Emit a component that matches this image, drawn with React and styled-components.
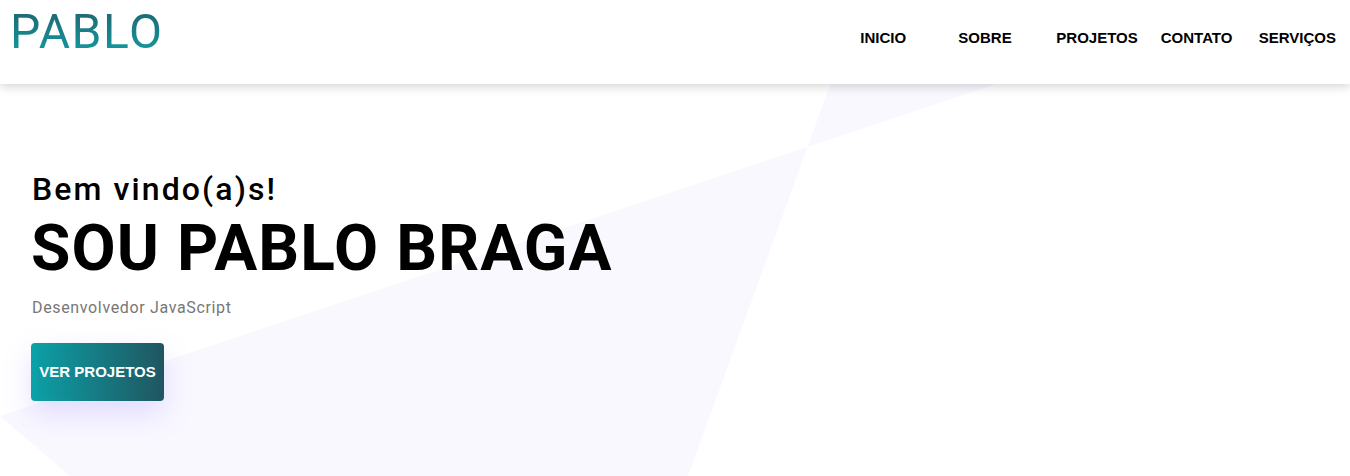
import styled, { createGlobalStyle } from "styled-components";

const GlobalStyle = createGlobalStyle`
    * {
        box-sizing: border-box;
    }

    body {
        margin: 0;
        background: #ffffff;
        font-family: Roboto, "Liberation Sans", Arial, sans-serif;
    }
`;

const links = ["INICIO", "SOBRE", "PROJETOS", "CONTATO", "SERVIÇOS"];

export default function App() {
    return (
        <>
            <GlobalStyle />
            <Page>
                <Backdrop viewBox="0 0 1350 476" preserveAspectRatio="none" aria-hidden="true">
                    <polygon points="861,0 1248,0 807.6,146.8" />
                    <polygon points="807.6,146.8 0,416 70,476 688,476" />
                </Backdrop>

                <Header>
                    <Logo>PABLO</Logo>
                    <Nav>
                        {links.map((link) => (
                            <NavLink key={link} href="#">{link}</NavLink>
                        ))}
                    </Nav>
                </Header>

                <Hero>
                    <Welcome>Bem vindo(a)s!</Welcome>
                    <Title>SOU PABLO BRAGA</Title>
                    <Role>Desenvolvedor JavaScript</Role>
                    <Button>
                        <ButtonInner>VER PROJETOS</ButtonInner>
                    </Button>
                </Hero>
            </Page>
        </>
    );
}

const Page = styled.div`
    position: relative;
    width: 100%;
    height: 476px;
    overflow: hidden;
`;

const Backdrop = styled.svg`
    position: absolute;
    top: 0;
    left: 0;
    width: 1350px;
    height: 476px;
    z-index: 0;

    polygon {
        fill: #f9f8ff;
    }
`;

const Header = styled.header`
    position: relative;
    z-index: 2;
    display: flex;
    justify-content: space-between;
    align-items: flex-start;
    height: 84px;
    padding: 0 14px 0 10px;
    background: #ffffff;
    box-shadow: 0 3px 9px rgba(0, 0, 0, 0.16);
`;

const Logo = styled.h1`
    margin: 4px 0 0;
    font-family: Roboto, sans-serif;
    font-weight: 400;
    font-size: 48px;
    line-height: 56px;
    letter-spacing: 1.6px;
    background: linear-gradient(180deg, #1e6670 10%, #139ba2 90%);
    -webkit-background-clip: text;
    background-clip: text;
    color: transparent;
`;

const Nav = styled.nav`
    display: flex;
    gap: 23px;
    margin-top: 29px;
`;

const NavLink = styled.a`
    min-width: 75px;
    font-family: "Liberation Sans", Arial, sans-serif;
    font-weight: 700;
    font-size: 15px;
    line-height: 17px;
    color: #000000;
    text-decoration: none;
`;

const Hero = styled.section`
    position: relative;
    z-index: 1;
    display: flex;
    flex-direction: column;
    align-items: flex-start;
    padding: 86px 0 0 31px;
`;

const Welcome = styled.h3`
    margin: 0 0 0 1px;
    font-weight: 500;
    font-size: 32px;
    line-height: 38px;
    letter-spacing: 2.1px;
    color: #000000;
`;

const Title = styled.h2`
    margin: 3px 0 0 0;
    font-weight: 700;
    font-size: 64px;
    line-height: 75px;
    letter-spacing: 1.1px;
    color: #000000;
`;

const Role = styled.p`
    margin: 12px 0 0 1px;
    font-size: 16px;
    line-height: 19px;
    letter-spacing: 0.65px;
    color: #777777;
`;

const Button = styled.button`
    display: flex;
    margin-top: 26px;
    width: 133px;
    height: 58px;
    padding: 4px 7px;
    border: none;
    border-radius: 4px;
    background: linear-gradient(90deg, #0aa3a9 0%, #1f5560 100%);
    box-shadow: 0 12px 30px rgba(130, 100, 255, 0.2);
    cursor: pointer;
`;

const ButtonInner = styled.span`
    display: flex;
    align-items: center;
    justify-content: center;
    flex: 1;
    padding-bottom: 2px;
    background: linear-gradient(90deg, #0d9ca3 0%, #1f5a64 100%);
    font-family: "Liberation Sans", Arial, sans-serif;
    font-weight: 700;
    font-size: 15px;
    color: #ffffff;
    white-space: nowrap;
`;
